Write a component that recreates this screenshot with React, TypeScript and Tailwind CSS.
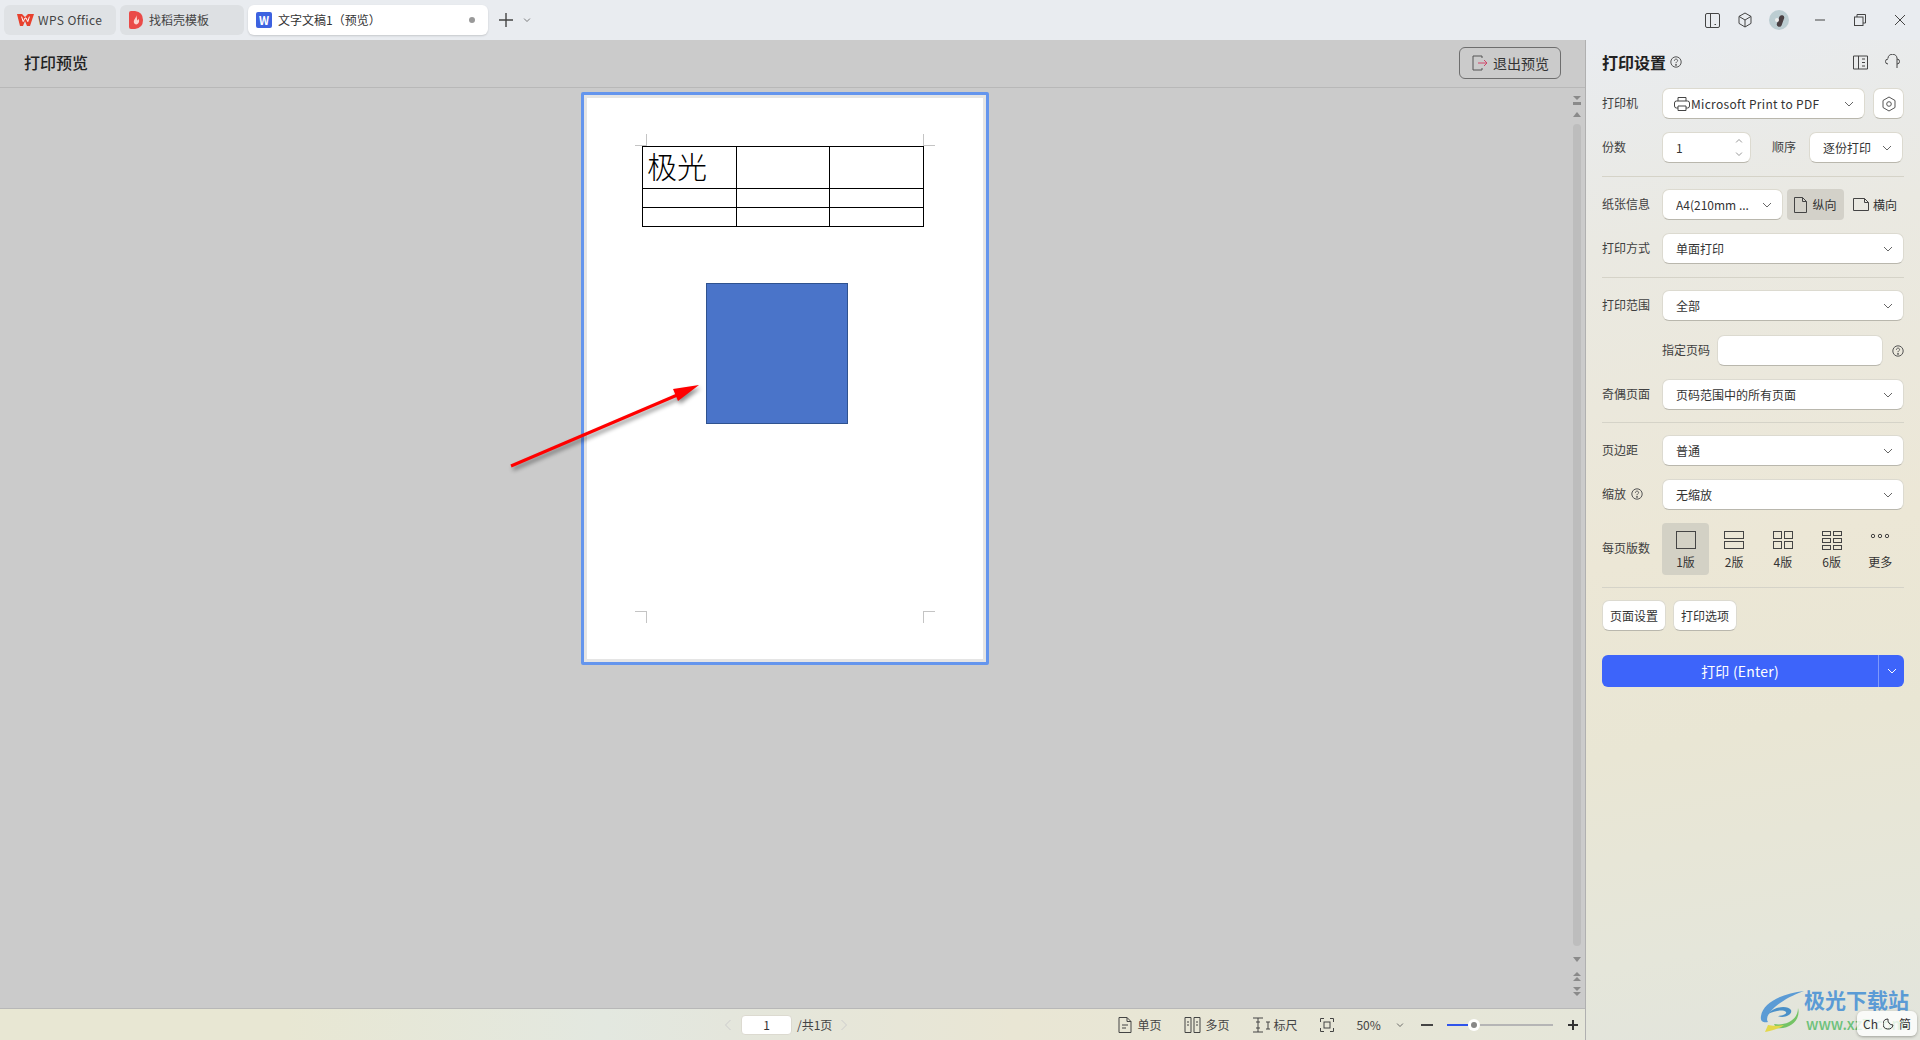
const Chevron = ({ className = 'text-[#666]' }: { className?: string }) => (
  <svg width="10" height="6" viewBox="0 0 10 6" fill="none" stroke="currentColor" className={className}>
    <path d="M1 1l4 4 4-4" />
  </svg>
);

const Help = ({ size = 12 }: { size?: number }) => (
  <svg width={size} height={size} viewBox="0 0 12 12" fill="none" stroke="#555" strokeWidth="1">
    <circle cx="6" cy="6" r="5.2" />
    <path d="M4.4 4.7c0-2.1 3.2-2.1 3.2-.1 0 1.2-1.6 1.2-1.6 2.6" />
    <circle cx="6" cy="8.9" r=".5" fill="#555" />
  </svg>
);

const Select = ({ value, className = '' }: { value: string; className?: string }) => (
  <div
    className={`flex h-[31px] items-center justify-between rounded-[7px] border border-[#dcdad0] border-b-[#b9b7ad] bg-white pl-[13px] pr-[10px] text-[12px] text-[#333] ${className}`}
  >
    <span className="truncate">{value}</span>
    <Chevron />
  </div>
);

const Label = ({ children }: { children: React.ReactNode }) => (
  <span className="mb-[2px] w-[60px] shrink-0 text-[12px] text-[#404040]">{children}</span>
);

const Divider = ({ className = '' }: { className?: string }) => <div className={`h-px bg-[#d5d3c8] ${className}`} />;

const layouts = [
  {
    label: '1版',
    icon: <rect x="1.5" y=".5" width="19" height="17" />,
  },
  {
    label: '2版',
    icon: (
      <>
        <rect x="1.5" y=".5" width="19" height="7" />
        <rect x="1.5" y="10.5" width="19" height="7" />
      </>
    ),
  },
  {
    label: '4版',
    icon: (
      <>
        <rect x="1.5" y=".5" width="8" height="7" />
        <rect x="12.5" y=".5" width="8" height="7" />
        <rect x="1.5" y="10.5" width="8" height="7" />
        <rect x="12.5" y="10.5" width="8" height="7" />
      </>
    ),
  },
  {
    label: '6版',
    icon: (
      <>
        <rect x="1.5" y=".5" width="8" height="4" />
        <rect x="12.5" y=".5" width="8" height="4" />
        <rect x="1.5" y="7.5" width="8" height="4" />
        <rect x="12.5" y="7.5" width="8" height="4" />
        <rect x="1.5" y="14.5" width="8" height="4" />
        <rect x="12.5" y="14.5" width="8" height="4" />
      </>
    ),
  },
  {
    label: '更多',
    icon: (
      <>
        <circle cx="4" cy="5" r="1.7" />
        <circle cx="11" cy="5" r="1.7" />
        <circle cx="18" cy="5" r="1.7" />
      </>
    ),
  },
];

const Mark = ({ className }: { className: string }) => <span className={`absolute border-[#c4c4c4] ${className}`} />;

const ScrollIcon = ({ d }: { d: string }) => (
  <svg width="8" height="10" viewBox="0 0 8 10" fill="#8a8a8a">
    <path d={d} />
  </svg>
);

export default function App() {
  return (
    <div className="flex h-[1040px] w-[1920px] flex-col overflow-hidden bg-[#e9ecf0] font-['Noto_Sans_CJK_SC',sans-serif] text-[#333]">
      <header className="flex h-10 shrink-0 items-center">
        <div className="ml-1 flex h-[30px] w-[112px] items-center rounded-[6px] bg-[#dfe2e5] pl-[13px] text-[12px] tracking-[0.4px] text-[#444]">
          <svg width="17" height="14" viewBox="0 0 17 14" className="mr-[4px]">
            <path d="M0 1l5 0 3 3 3-3 6 0-4 12-3 0-2-5-2 5-3 0z" fill="#e8412e" />
            <path d="M4.6 3.6l1.6 5 1.8-3.6 1 0 1.8 3.6 1.6-5" fill="none" stroke="#fff" strokeWidth="1" />
          </svg>
          WPS Office
        </div>
        <div className="ml-1 flex h-[30px] w-[124px] items-center rounded-[6px] bg-[#dde0e3] pl-[9px] text-[12px] text-[#444]">
          <svg width="14" height="18" viewBox="0 0 14 18" className="mr-[6px]">
            <path d="M0 2q0-2 2-2h4q8 1 8 9t-8 9H2q-2 0-2-2z" fill="#ea4a48" />
            <path d="M7 4c1 3-3 4-2 8 1 2 4 2 5-1 .5-2-.5-3-1-3 0 1-1 2-1 1s0-3-1-5z" fill="#fbd4cf" />
          </svg>
          找稻壳模板
        </div>
        <div className="ml-1 flex h-[30px] w-[240px] items-center rounded-[6px] bg-white pl-[8px] text-[12px] text-[#333] shadow-[0_1px_2px_rgba(0,0,0,0.15)]">
          <span className="mr-[6px] flex h-4 w-4 items-center justify-center rounded-[2px] bg-[#3d62e0] text-[11px] font-bold leading-none text-white">
            W
          </span>
          文字文稿1（预览）
          <span className="ml-auto mr-[13px] h-[6px] w-[6px] rounded-full bg-[#999]" />
        </div>
        <svg width="16" height="16" viewBox="0 0 16 16" stroke="#444" strokeWidth="1.4" className="ml-[10px]">
          <path d="M8 1v14M1 8h14" />
        </svg>
        <Chevron className="ml-[8px] scale-75 text-[#555]" />

        <div className="ml-auto flex items-center text-[#444]">
          <svg width="15" height="15" viewBox="0 0 15 15" fill="none" stroke="#444">
            <rect x=".5" y=".5" width="14" height="14" rx="1.5" />
            <path d="M5.5 .5v14M9.500 11.500h1.500" />
          </svg>
          <svg width="16" height="16" viewBox="0 0 16 16" fill="none" stroke="#444" className="ml-[17px]">
            <path d="M8 1l6 3.400v7L8 15l-6-3.600v-7zM2 4.400L8 8l6-3.600M8 8v7" />
          </svg>
          <span className="relative ml-[16px] h-5 w-5 overflow-hidden rounded-full bg-[#bccdd2]">
            <span className="absolute left-[9px] top-[5px] h-[12px] w-[5px] rotate-[20deg] rounded-full bg-[#4a3f42]" />
            <span className="absolute left-[6px] top-[8px] h-[4px] w-[4px] rounded-full bg-[#eee]" />
          </span>
          <svg width="12" height="12" viewBox="0 0 12 12" stroke="#444" className="ml-[25px]">
            <path d="M1 6h10" />
          </svg>
          <svg width="12" height="12" viewBox="0 0 12 12" fill="none" stroke="#444" className="ml-[28px]">
            <rect x=".5" y="3" width="8.500" height="8.500" />
            <path d="M3 3V.5h8.500V9H9" />
          </svg>
          <svg width="12" height="12" viewBox="0 0 12 12" stroke="#444" className="ml-[28px] mr-[14px]">
            <path d="M1 1l10 10M11 1L1 11" />
          </svg>
        </div>
      </header>

      <div className="flex min-h-0 flex-1">
        <main className="flex w-[1586px] shrink-0 flex-col border-r border-[#b0b0b0]">
          <div className="flex h-[48px] shrink-0 items-center justify-between border-b border-[#b8b8b8] bg-[#cbcbcb] pl-6 pr-[24px]">
            <h1 className="mb-1 text-[16px] font-medium text-[#222]">打印预览</h1>
            <button className="mt-[-1px] flex h-8 w-[102px] items-center rounded-[6px] border border-[#6e6e6e] pl-[12px] text-[14px] text-[#333]">
              <svg width="16" height="16" viewBox="0 0 16 16" fill="none" className="mr-[5px]">
                <path d="M10 3V1H1v14h9v-2" stroke="#555" />
                <path d="M6 8h9M12 5l3 3-3 3" stroke="#d0476a" />
              </svg>
              退出预览
            </button>
          </div>

          <div className="relative min-h-0 flex-1 bg-[#cbcbcb] pl-[581px] pt-[4px]">
            <div className="h-[573px] w-[408px] rounded-[2px] border-[3px] border-[#6495ed]">
              <div className="h-full w-full border-[3px] border-[#e5e5e5] bg-white">
                <div className="relative h-full w-full pl-[55px] pt-[48px]">
                  <Mark className="left-[59px] top-[36px] h-[12px] w-px border-l" />
                  <Mark className="left-[48px] top-[47px] h-px w-[12px] border-t" />
                  <Mark className="left-[336px] top-[36px] h-[12px] w-px border-l" />
                  <Mark className="left-[336px] top-[47px] h-px w-[12px] border-t" />
                  <Mark className="left-[48px] top-[513px] h-px w-[12px] border-t" />
                  <Mark className="left-[59px] top-[513px] h-[12px] w-px border-l" />
                  <Mark className="left-[336px] top-[513px] h-px w-[12px] border-t" />
                  <Mark className="left-[336px] top-[513px] h-[12px] w-px border-l" />
                  <div className="grid w-[282px] grid-cols-[94px_93px_94px] grid-rows-[42px_19px_19px] border-l border-t border-black">
                    <div className="border-b border-r border-black pl-[4px] text-[30px] font-light leading-[36px] text-black">极光</div>
                    {Array.from({ length: 8 }).map((_, i) => (
                      <div key={i} className="border-b border-r border-black" />
                    ))}
                  </div>
                  <div className="ml-[64px] mt-[56px] h-[141px] w-[142px] border border-[#2f528f] bg-[#4a74c9]" />
                </div>
              </div>
            </div>

            <svg
              width="200"
              height="95"
              viewBox="505 378 200 95"
              className="absolute left-[505px] top-[290px] drop-shadow-[2px_3px_2px_rgba(0,0,0,0.45)]"
            >
              <path d="M511 466L682 393" stroke="#f00" strokeWidth="3" />
              <path d="M699 385L673 389L678 401Z" fill="#f00" />
            </svg>

            <div className="absolute bottom-[8px] left-[1573px] top-[8px] flex w-2 flex-col items-center">
              <ScrollIcon d="M0 0h8L4 4zM0 6h8v3H0z" />
              <div className="mt-[4px]">
                <ScrollIcon d="M4 2l4 5H0z" />
              </div>
              <div className="mt-[4px] h-[822px] w-2 rounded-full bg-[#bdbdbd]" />
              <div className="mt-[9px]">
                <ScrollIcon d="M0 2h8L4 7z" />
              </div>
              <div className="mt-[7px]">
                <ScrollIcon d="M4 0l4 4H0zM4 5l4 4H0z" />
              </div>
              <div className="mt-[5px]">
                <ScrollIcon d="M0 0h8L4 4zM0 5h8L4 9z" />
              </div>
            </div>
          </div>

          <div className="flex h-8 shrink-0 items-center border-t border-[#b8b8b8] bg-[linear-gradient(90deg,#e8e7d3_0%,#e8e7d3_18%,#e3e8e0_38%,#e4e6dc_46%,#e9e6d4_64%,#e5e6d9_100%)] pl-[725px] text-[12px] text-[#444]">
            <svg width="6" height="12" viewBox="0 0 6 12" fill="none" stroke="#ccc">
              <path d="M5.500 1L.5 6l5 5" />
            </svg>
            <input
              readOnly
              value="1"
              className="ml-[10px] h-[20px] w-[51px] rounded-[4px] border border-[#dcdad0] bg-white text-center text-[12px] text-[#333]"
            />
            <span className="ml-[5px] text-[12px]">/共1页</span>
            <svg width="6" height="12" viewBox="0 0 6 12" fill="none" stroke="#ccc" className="ml-[9px]">
              <path d="M.5 1l5 5-5 5" />
            </svg>

            <svg width="14" height="16" viewBox="0 0 14 16" fill="none" stroke="#444" className="ml-[271px]">
              <path d="M1 .5h8l4 4v11H1zM9 .5v4h4M4 8h6M4 11h4" />
            </svg>
            <span className="ml-[5px]">单页</span>
            <svg width="17" height="16" viewBox="0 0 17 16" fill="none" stroke="#444" className="ml-[23px]">
              <path d="M1 .5h6v15H1zM10 .5h6v15h-6zM3 5h2M3 8h2M12 5h2M12 8h2" />
            </svg>
            <span className="ml-[4px]">多页</span>
            <svg width="19" height="16" viewBox="0 0 19 16" fill="none" stroke="#444" className="ml-[23px]">
              <path d="M1 1h10M1 15h10M6 1v14M4 5h4M4 11h4M14 5h4M16 5v7M14 12h4" />
            </svg>
            <span className="ml-[2px]">标尺</span>
            <svg width="14" height="14" viewBox="0 0 14 14" fill="none" stroke="#444" className="ml-[23px]">
              <path d="M.5 4V.5H4M10 .5h3.500V4M13.500 10v3.500H10M4 13.500H.5V10" />
              <rect x="4" y="4" width="6" height="6" />
            </svg>
            <span className="ml-[22px]">50%</span>
            <Chevron className="ml-[14px] scale-75 text-[#444]" />
            <span className="ml-[16px] h-[2px] w-[12px] bg-[#444]" />
            <div className="relative ml-[14px] h-[2px] w-[106px] bg-[#b5b5b5]">
              <div className="h-full w-[21px] bg-[#2f54eb]" />
              <span className="absolute left-[21px] top-[-5px] flex h-3 w-3 items-center justify-center rounded-full bg-white">
                <span className="h-[6px] w-[6px] rounded-full bg-[#888]" />
              </span>
            </div>
            <svg width="12" height="12" viewBox="0 0 12 12" stroke="#333" strokeWidth="2" className="ml-[14px]">
              <path d="M6 1v10M1 6h10" />
            </svg>
          </div>
        </main>

        <aside className="relative flex-1 bg-[linear-gradient(170deg,#e9ecf0_0%,#eae9e2_20%,#ece7d6_50%,#e9e6d4_68%,#e5e6da_88%,#e2e4dc_100%)] pl-4 pr-[16px] text-[12px]">
          <div className="flex h-[48px] items-center pb-1">
            <h2 className="text-[16px] font-bold text-[#222]">打印设置</h2>
            <span className="ml-[4px] flex">
              <Help />
            </span>
            <svg width="15" height="15" viewBox="0 0 15 15" fill="none" stroke="#444" className="ml-auto">
              <path d="M.5 1h14v13H.5zM5.500 1v13M9 4h3M9 7.500h3M9 11h3" />
            </svg>
            <svg width="15" height="16" viewBox="0 0 15 16" fill="none" stroke="#444" className="ml-[17px] mr-[4px]">
              <path d="M3 4.500V4.200a4.500 4 0 019 0v9.800M3 5a2.500 2.500 0 000 5M12 5a2.500 2.500 0 010 5" />
            </svg>
          </div>

          <div className="flex items-center">
            <Label>打印机</Label>
            <div className="flex h-[31px] w-[203px] items-center justify-between rounded-[7px] border border-[#dcdad0] border-b-[#b9b7ad] bg-white pl-[11px] pr-[10px]">
              <span className="flex items-center gap-px truncate tracking-[0.3px]">
                <svg width="16" height="16" viewBox="0 0 16 16" fill="none" stroke="#444">
                  <path d="M4 5V1.500h8V5M4 12H2.500q-2 0-2-2V7q0-2 2-2h11q2 0 2 2v3q0 2-2 2H12M4 10h8v4.500H4z" />
                </svg>
                Microsoft Print to PDF
              </span>
              <Chevron />
            </div>
            <button className="ml-2 flex h-[31px] w-[31px] items-center justify-center rounded-[7px] border border-[#dcdad0] border-b-[#b9b7ad] bg-white">
              <svg width="14" height="16" viewBox="0 0 14 16" fill="none" stroke="#555">
                <path d="M7 1l6 3.500v7L7 15l-6-3.500v-7z" />
                <circle cx="7" cy="8" r="2.300" />
              </svg>
            </button>
          </div>

          <div className="mt-[13px] flex items-center">
            <Label>份数</Label>
            <div className="flex h-[31px] w-[89px] items-center justify-between rounded-[7px] border border-[#dcdad0] border-b-[#b9b7ad] bg-white pl-[13px] pr-[6px]">
              <span>1</span>
              <span className="flex flex-col gap-[7px]">
                <Chevron className="rotate-180 scale-75 text-[#777]" />
                <Chevron className="scale-75 text-[#777]" />
              </span>
            </div>
            <span className="mb-[2px] ml-[21px] w-[37px] text-[#404040]">顺序</span>
            <Select value="逐份打印" className="w-[94px]" />
          </div>

          <Divider className="mt-[13px]" />

          <div className="mt-3 flex items-center">
            <Label>纸张信息</Label>
            <Select value="A4(210mm ..." className="w-[121px]" />
            <button className="ml-[4px] flex h-[31px] w-[57px] items-center justify-center gap-[5px] rounded-[4px] bg-[#d3d1c9]">
              <svg width="13" height="16" viewBox="0 0 13 16" fill="none" stroke="#444">
                <path d="M.5.500h8l4 4v11H.5zM8.500.500v4h4" />
              </svg>
              纵向
            </button>
            <button className="ml-[9px] flex items-center gap-[4px]">
              <svg width="16" height="13" viewBox="0 0 16 13" fill="none" stroke="#444">
                <path d="M.5.500h11l4 4v8H.5zM11.500.500v4h4" />
              </svg>
              横向
            </button>
          </div>

          <div className="mt-[13px] flex items-center">
            <Label>打印方式</Label>
            <Select value="单面打印" className="w-[242px]" />
          </div>

          <Divider className="mt-[13px]" />

          <div className="mt-3 flex items-center">
            <Label>打印范围</Label>
            <Select value="全部" className="w-[242px]" />
          </div>

          <div className="mt-[14px] flex items-center">
            <span className="mb-[2px] ml-[60px] w-[55px] text-[#404040]">指定页码</span>
            <div className="h-[31px] w-[166px] rounded-[7px] border border-[#dcdad0] border-b-[#b9b7ad] bg-white" />
            <span className="ml-[9px] flex">
              <Help />
            </span>
          </div>

          <div className="mt-[13px] flex items-center">
            <Label>奇偶页面</Label>
            <Select value="页码范围中的所有页面" className="w-[242px]" />
          </div>

          <Divider className="mt-3" />

          <div className="mt-3 flex items-center">
            <Label>页边距</Label>
            <Select value="普通" className="w-[242px]" />
          </div>

          <div className="mt-[13px] flex items-center">
            <span className="mb-[2px] flex w-[60px] items-center gap-[5px] text-[#404040]">
              缩放 <Help />
            </span>
            <Select value="无缩放" className="w-[242px]" />
          </div>

          <div className="mt-[13px] flex items-center">
            <Label>每页版数</Label>
            <div className="flex gap-[1.700px]">
              {layouts.map((item, i) => (
                <div
                  key={item.label}
                  className={`flex h-[52px] w-[47px] flex-col items-center rounded-[4px] pt-[8px] ${i === 0 ? 'bg-[#d3d1c5]' : ''}`}
                >
                  <svg width="22" height="19" viewBox="0 0 22 19" fill="none" stroke="#444" className="mb-[3px]">
                    {item.icon}
                  </svg>
                  <span>{item.label}</span>
                </div>
              ))}
            </div>
          </div>

          <Divider className="mt-3" />

          <div className="mt-3 flex gap-[7px]">
            <button className="h-[31px] w-[64px] rounded-[7px] border border-[#dcdad0] border-b-[#b9b7ad] bg-white">页面设置</button>
            <button className="h-[31px] w-[64px] rounded-[7px] border border-[#dcdad0] border-b-[#b9b7ad] bg-white">打印选项</button>
          </div>

          <div className="mt-6 flex h-8 w-[302px] items-center rounded-[6px] bg-[#3d64fa] text-[14px] tracking-[0.2px] text-white">
            <span className="flex-1 text-center">打印 (Enter)</span>
            <span className="flex h-full w-[26px] items-center justify-center border-l border-[#7f99fb]">
              <Chevron className="text-white" />
            </span>
          </div>

          <div className="absolute bottom-0 left-[174px] h-[50px] w-[160px]">
            <svg width="48" height="42" viewBox="0 0 48 42" className="absolute left-0 top-[0px]">
              <path d="M44 1C24 3 3 12 1 26c-1 6 3 7 7 6C3 26 18 10 44 1z" fill="#5b9bd5" />
              <path d="M8 24c6-8 20-9 23-4 2 5-8 9-13 6 5 0 9-2 8-4-3-3-12-1-18 2z" fill="#4a90c8" />
              <path d="M14 34c12 2 24-4 24-16 3 10-6 22-22 20z" fill="#74c365" />
              <path d="M5 42c6-1 14-3 19-7-6 1-12 1-16 0z" fill="#e3d84a" />
            </svg>
            <span className="absolute left-[44px] top-[-5px] whitespace-nowrap text-[21px] font-bold leading-[28px] text-[#5b9bd5]">
              极光下载站
            </span>
            <span className="absolute left-[46px] top-[24px] whitespace-nowrap text-[15px] font-medium leading-[20px] text-[#6cc17a]">
              www.xz7.com
            </span>
            <span className="absolute bottom-[4px] left-[97px] flex h-[25px] w-[60px] items-center justify-center gap-[5px] rounded-[6px] bg-white/80 text-[12px] text-[#333] shadow-[0_1px_3px_rgba(0,0,0,0.3)]">
              Ch
              <svg width="11" height="12" viewBox="0 0 11 12" fill="none" stroke="#333">
                <path d="M5 1a5 5 0 105 6A5 5 0 015 1z" />
              </svg>
              简
            </span>
          </div>
        </aside>
      </div>
    </div>
  );
}
